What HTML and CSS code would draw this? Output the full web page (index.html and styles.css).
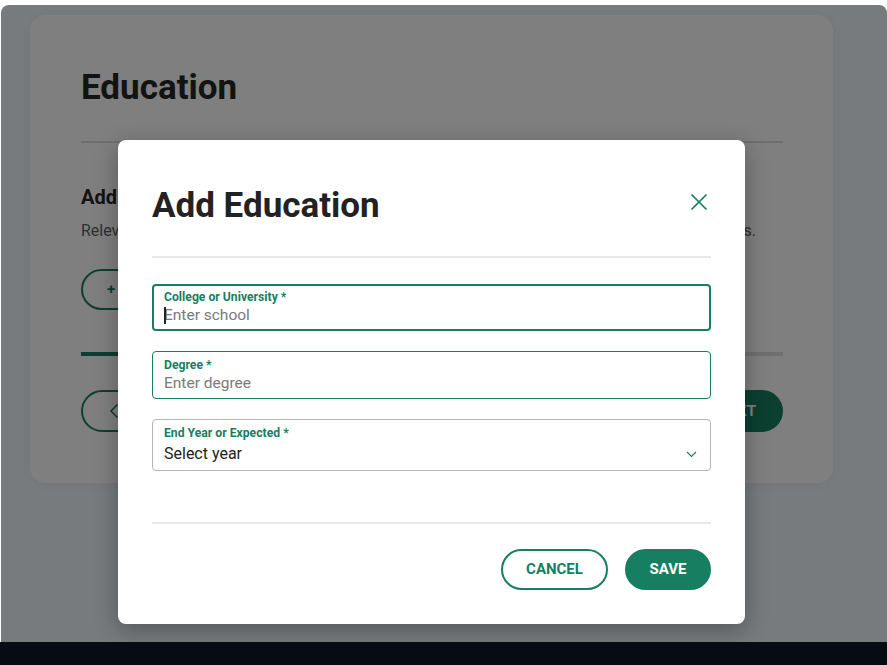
FILE: index.html
```html
<!DOCTYPE html>
<html lang="en">
<head>
<meta charset="utf-8">
<title>Add Education</title>
<link rel="stylesheet" href="styles.css">
</head>
<body>
<div class="window">
  <main class="card">
    <h1 class="card-title">Education</h1>
    <hr class="card-divider">
    <h2 class="card-sub">Add Education</h2>
    <p class="card-text">Relevant education can include degrees, certificates, bootcamps and other training programs.</p>
    <button class="btn-outline add-btn">+ ADD EDUCATION</button>
    <div class="progress"><div class="progress-fill" style="width:45%"></div></div>
    <div class="card-nav">
      <button class="btn-outline back-btn">
        <svg class="back-icon" width="10" height="16" viewBox="0 0 10 16"><path d="M8.5 1.5L2 8l6.5 6.5" fill="none" stroke="#177f61" stroke-width="1.6"/></svg>
        BACK
      </button>
      <button class="btn-fill next-btn">NEXT</button>
    </div>
  </main>

  <div class="overlay">
    <section class="modal" role="dialog" aria-labelledby="modal-title">
      <header class="modal-head">
        <h2 class="modal-title" id="modal-title">Add Education</h2>
        <button class="close-btn" aria-label="Close">
          <svg width="24" height="24" viewBox="0 0 24 24"><path d="M4.5 4.5l15 15M19.5 4.5l-15 15" fill="none" stroke="#177f61" stroke-width="1.7"/></svg>
        </button>
      </header>
      <div class="modal-divider"></div>
      <div class="fields">
        <label class="field field-focus">
          <span class="field-label">College or University *</span>
          <input class="field-input" type="text" placeholder="Enter school">
          <span class="caret"></span>
        </label>
        <label class="field field-green">
          <span class="field-label">Degree *</span>
          <input class="field-input" type="text" placeholder="Enter degree">
        </label>
        <div class="field field-gray">
          <span class="field-label">End Year or Expected *</span>
          <div class="select-row">
            <span class="select-value">Select year</span>
            <svg class="select-icon" width="11" height="7" viewBox="0 0 11 7"><path d="M1 1l4.5 4.5L10 1" fill="none" stroke="#177f61" stroke-width="1.1"/></svg>
          </div>
        </div>
      </div>
      <div class="modal-divider footer-divider"></div>
      <footer class="modal-actions">
        <button class="btn-outline cancel-btn">CANCEL</button>
        <button class="btn-fill save-btn">SAVE</button>
      </footer>
    </section>
  </div>
</div>
<div class="taskbar"></div>
</body>
</html>
```

FILE: styles.css
```css
* { box-sizing: border-box; }

html, body {
  margin: 0;
  padding: 0;
  background: #ffffff;
  font-family: Roboto, "Noto Sans", "Liberation Sans", sans-serif;
}

.window {
  position: relative;
  margin: 5px 0 0 1px;
  height: 637px;
  background: #eef6fc;
  border-radius: 8px 8px 0 0;
  overflow: hidden;
  padding: 10px 0 0 29px;
}

.taskbar {
  height: 23px;
  background: #070b13;
}

/* ---------- background card ---------- */
.card {
  width: 803px;
  height: 468px;
  background: #ffffff;
  border-radius: 16px;
  padding: 52px 50px 0 51px;
  box-shadow: 0 2px 12px rgba(0, 0, 0, 0.04);
}

.card-title {
  margin: 0;
  font-size: 35px;
  line-height: 42px;
  font-weight: 700;
  color: #262626;
}

.card-divider {
  margin: 32px 0 0;
  border: 0;
  height: 2px;
  background: #dedede;
}

.card-sub {
  margin: 40px 0 0;
  font-size: 20px;
  line-height: 28px;
  font-weight: 700;
  color: #262626;
}

.card-text {
  margin: 8px 0 0;
  width: 675px;
  font-size: 16px;
  line-height: 24px;
  color: #5e5e5e;
  white-space: nowrap;
  text-align: justify;
  text-align-last: justify;
}

.btn-outline,
.btn-fill {
  font-family: Roboto, "Noto Sans", sans-serif;
  font-weight: 700;
  font-size: 15px;
  height: 41px;
  border-radius: 21px;
  display: inline-flex;
  align-items: center;
  justify-content: center;
  cursor: pointer;
  line-height: 1;
}

.btn-outline {
  background: #ffffff;
  color: #177f61;
  border: 2px solid #177f61;
}

.btn-fill {
  background: #177f61;
  color: #ffffff;
  border: 2px solid #177f61;
}

.add-btn {
  margin-top: 26px;
  padding: 0 24px;
}

.progress {
  margin-top: 42px;
  height: 4px;
  background: #dedede;
}

.progress-fill {
  height: 100%;
  background: #177f61;
}

.card-nav {
  margin-top: 34px;
  display: flex;
  justify-content: space-between;
}

.back-btn {
  padding: 0 26px;
  gap: 10px;
  height: 42px;
}

.next-btn {
  padding: 0 25px;
  height: 42px;
}

/* ---------- overlay & modal ---------- */
.overlay {
  position: absolute;
  inset: 0;
  background: rgba(0, 0, 0, 0.5);
  padding: 135px 0 0 117px;
}

.modal {
  width: 627px;
  height: 484px;
  background: #ffffff;
  border-radius: 8px;
  box-shadow: 0 6px 24px rgba(0, 0, 0, 0.3);
  padding: 45px 34px 34px;
  display: flex;
  flex-direction: column;
}

.modal-head {
  display: flex;
  justify-content: space-between;
  align-items: flex-start;
}

.modal-title {
  margin: 0;
  font-size: 35px;
  line-height: 42px;
  font-weight: 700;
  color: #222222;
}

.close-btn {
  margin-top: 5px;
  width: 24px;
  height: 24px;
  padding: 0;
  border: 0;
  background: none;
  cursor: pointer;
  display: flex;
}

.modal-divider {
  margin-top: 29px;
  height: 2px;
  background: #e8e8e8;
}

.fields {
  margin-top: 26px;
  display: flex;
  flex-direction: column;
  gap: 20px;
}

.field {
  position: relative;
  display: flex;
  flex-direction: column;
  border-radius: 4px;
  padding: 5px 11px;
  border: 1px solid #177f61;
}

.field-focus {
  border: 2px solid #177f61;
  padding: 3px 10px 4px;
}

.field-gray {
  border-color: #b5b5b5;
  padding-right: 13px;
}

.field-label {
  font-size: 12.2px;
  line-height: 16px;
  font-weight: 700;
  color: #177f61;
}

.field-input {
  border: 0;
  outline: none;
  padding: 0;
  margin: 0;
  font-family: Roboto, "Noto Sans", sans-serif;
  font-size: 15.5px;
  line-height: 20px;
  height: 20px;
  color: #222222;
  background: transparent;
}

.field-input::placeholder {
  color: #7a7a7a;
  opacity: 1;
}

.caret {
  position: absolute;
  left: 10px;
  top: 21px;
  width: 1.5px;
  height: 17px;
  background: #222222;
}

.select-row {
  display: flex;
  align-items: center;
  justify-content: space-between;
  height: 24px;
  padding-top: 2px;
}

.select-value {
  font-size: 16px;
  line-height: 22px;
  color: #222222;
}

.select-icon {
  display: block;
}

.footer-divider {
  margin-top: 51px;
}

.modal-actions {
  margin-top: 25px;
  display: flex;
  justify-content: flex-end;
  gap: 17px;
}

.cancel-btn {
  width: 107px;
}

.save-btn {
  width: 86px;
}
```
